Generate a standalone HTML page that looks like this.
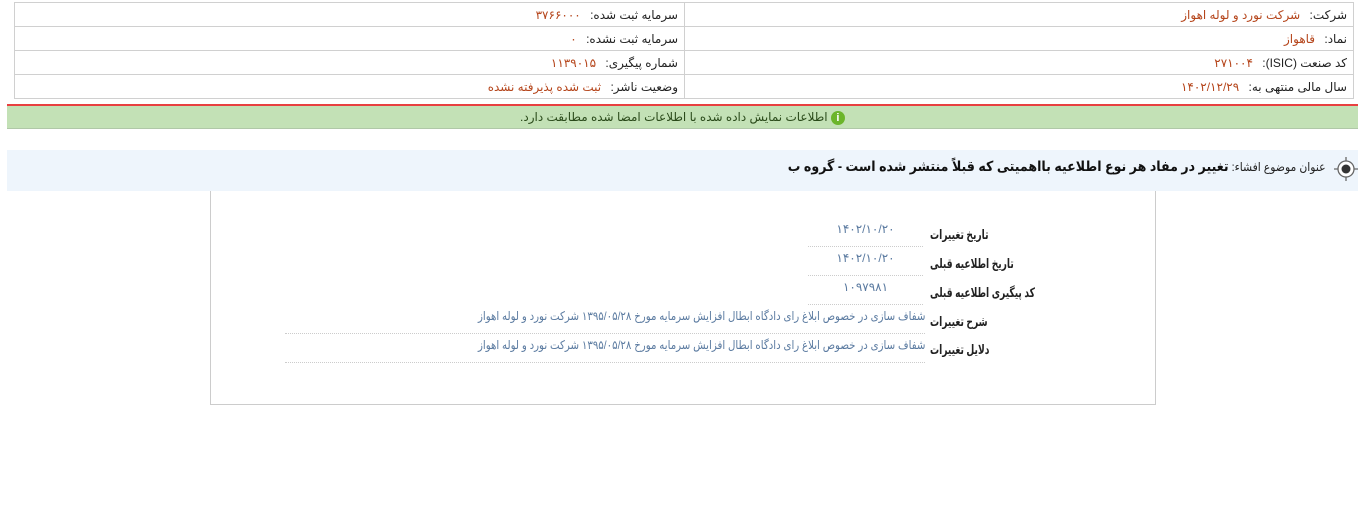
<!DOCTYPE html>
<html><head><meta charset="utf-8"><style>
body{margin:0;width:1358px;height:532px;background:#fff;font-family:"Liberation Sans","DejaVu Sans",sans-serif;font-size:12px;color:#222;position:relative;overflow:hidden}
.a{position:absolute}
table.t{position:absolute;left:14px;top:2px;width:1340px;border-collapse:collapse;direction:rtl}
table.t td{border:1px solid #d0d0d0;height:23px;padding:0 6px;font-size:12px;white-space:nowrap}
.v{color:#b5451b;margin-right:6px}
.lbl{position:absolute;left:930px;font-weight:bold;font-size:13px;direction:rtl;text-align:left;color:#222;white-space:nowrap;transform:scaleX(.7);transform-origin:left center}
.val{position:absolute;direction:rtl;text-align:center;color:#5a7aa0;font-size:12px;border-bottom:1px dotted #ccc;height:24px}
.sq{display:inline-block;transform:scaleX(.85);transform-origin:right center;white-space:nowrap}
</style></head><body>
<table class="t">
<tr><td style="width:656px">شرکت: <span class="v">شرکت نورد و لوله اهواز</span></td><td>سرمایه ثبت شده: <span class="v">۳۷۶۶۰۰۰</span></td></tr>
<tr><td>نماد: <span class="v">قاهواز</span></td><td>سرمایه ثبت نشده: <span class="v">۰</span></td></tr>
<tr><td>کد صنعت (ISIC): <span class="v">۲۷۱۰۰۴</span></td><td>شماره پیگیری: <span class="v">۱۱۳۹۰۱۵</span></td></tr>
<tr><td>سال مالی منتهی به: <span class="v">۱۴۰۲/۱۲/۲۹</span></td><td>وضعیت ناشر: <span class="v">ثبت شده پذیرفته نشده</span></td></tr>
</table>
<div class="a" style="left:7px;top:104px;width:1351px;height:2px;background:#e84040"></div>
<div class="a" style="left:7px;top:106px;width:1351px;height:22px;background:#c3e1b6;border-bottom:1px solid #b0c8a8;text-align:center;line-height:22px;color:#2a4a1a;direction:rtl">
<span style="display:inline-block;width:14px;height:14px;border-radius:50%;background:#6bb52a;color:#fff;font-weight:bold;font-size:11px;line-height:14px;vertical-align:middle">i</span> اطلاعات نمایش داده شده با اطلاعات امضا شده مطابقت دارد.</div>
<div class="a" style="left:7px;top:150px;width:1351px;height:41px;background:#eef5fc"></div>
<svg class="a" style="left:1333px;top:156px" width="26" height="26" viewBox="0 0 26 26"><circle cx="13" cy="13" r="8" fill="#fff" stroke="#666" stroke-width="1.3"/><circle cx="13" cy="13" r="4.5" fill="#333"/><path d="M13 1v4M13 21v4M1 13h4M21 13h4" stroke="#666" stroke-width="1.3"/></svg>
<div class="a" style="right:32px;top:158px;direction:rtl;font-size:12px;white-space:nowrap;transform:scaleX(.9);transform-origin:right center">عنوان موضوع افشاء: <b style="font-size:14px;color:#111">تغییر در مفاد هر نوع اطلاعیه بااهمیتی که قبلاً منتشر شده است - گروه ب</b></div>
<div class="a" style="left:210px;top:191px;width:944px;height:213px;border:1px solid #ccc;border-top:none"></div>
<div class="lbl" style="top:227px">تاریخ تغییرات</div>
<div class="lbl" style="top:256px">تاریخ اطلاعیه قبلی</div>
<div class="lbl" style="top:285px">کد پیگیری اطلاعیه قبلی</div>
<div class="lbl" style="top:314px">شرح تغییرات</div>
<div class="lbl" style="top:342px">دلایل تغییرات</div>
<div class="val" style="left:808px;top:222px;width:115px">۱۴۰۲/۱۰/۲۰</div>
<div class="val" style="left:808px;top:251px;width:115px">۱۴۰۲/۱۰/۲۰</div>
<div class="val" style="left:808px;top:280px;width:115px">۱۰۹۷۹۸۱</div>
<div class="val" style="left:285px;top:309px;width:640px;text-align:right"><span class="sq">شفاف سازی در خصوص ابلاغ رای دادگاه ابطال افزایش سرمایه مورخ ۱۳۹۵/۰۵/۲۸ شرکت نورد و لوله اهواز</span></div>
<div class="val" style="left:285px;top:338px;width:640px;text-align:right"><span class="sq">شفاف سازی در خصوص ابلاغ رای دادگاه ابطال افزایش سرمایه مورخ ۱۳۹۵/۰۵/۲۸ شرکت نورد و لوله اهواز</span></div>
</body></html>
